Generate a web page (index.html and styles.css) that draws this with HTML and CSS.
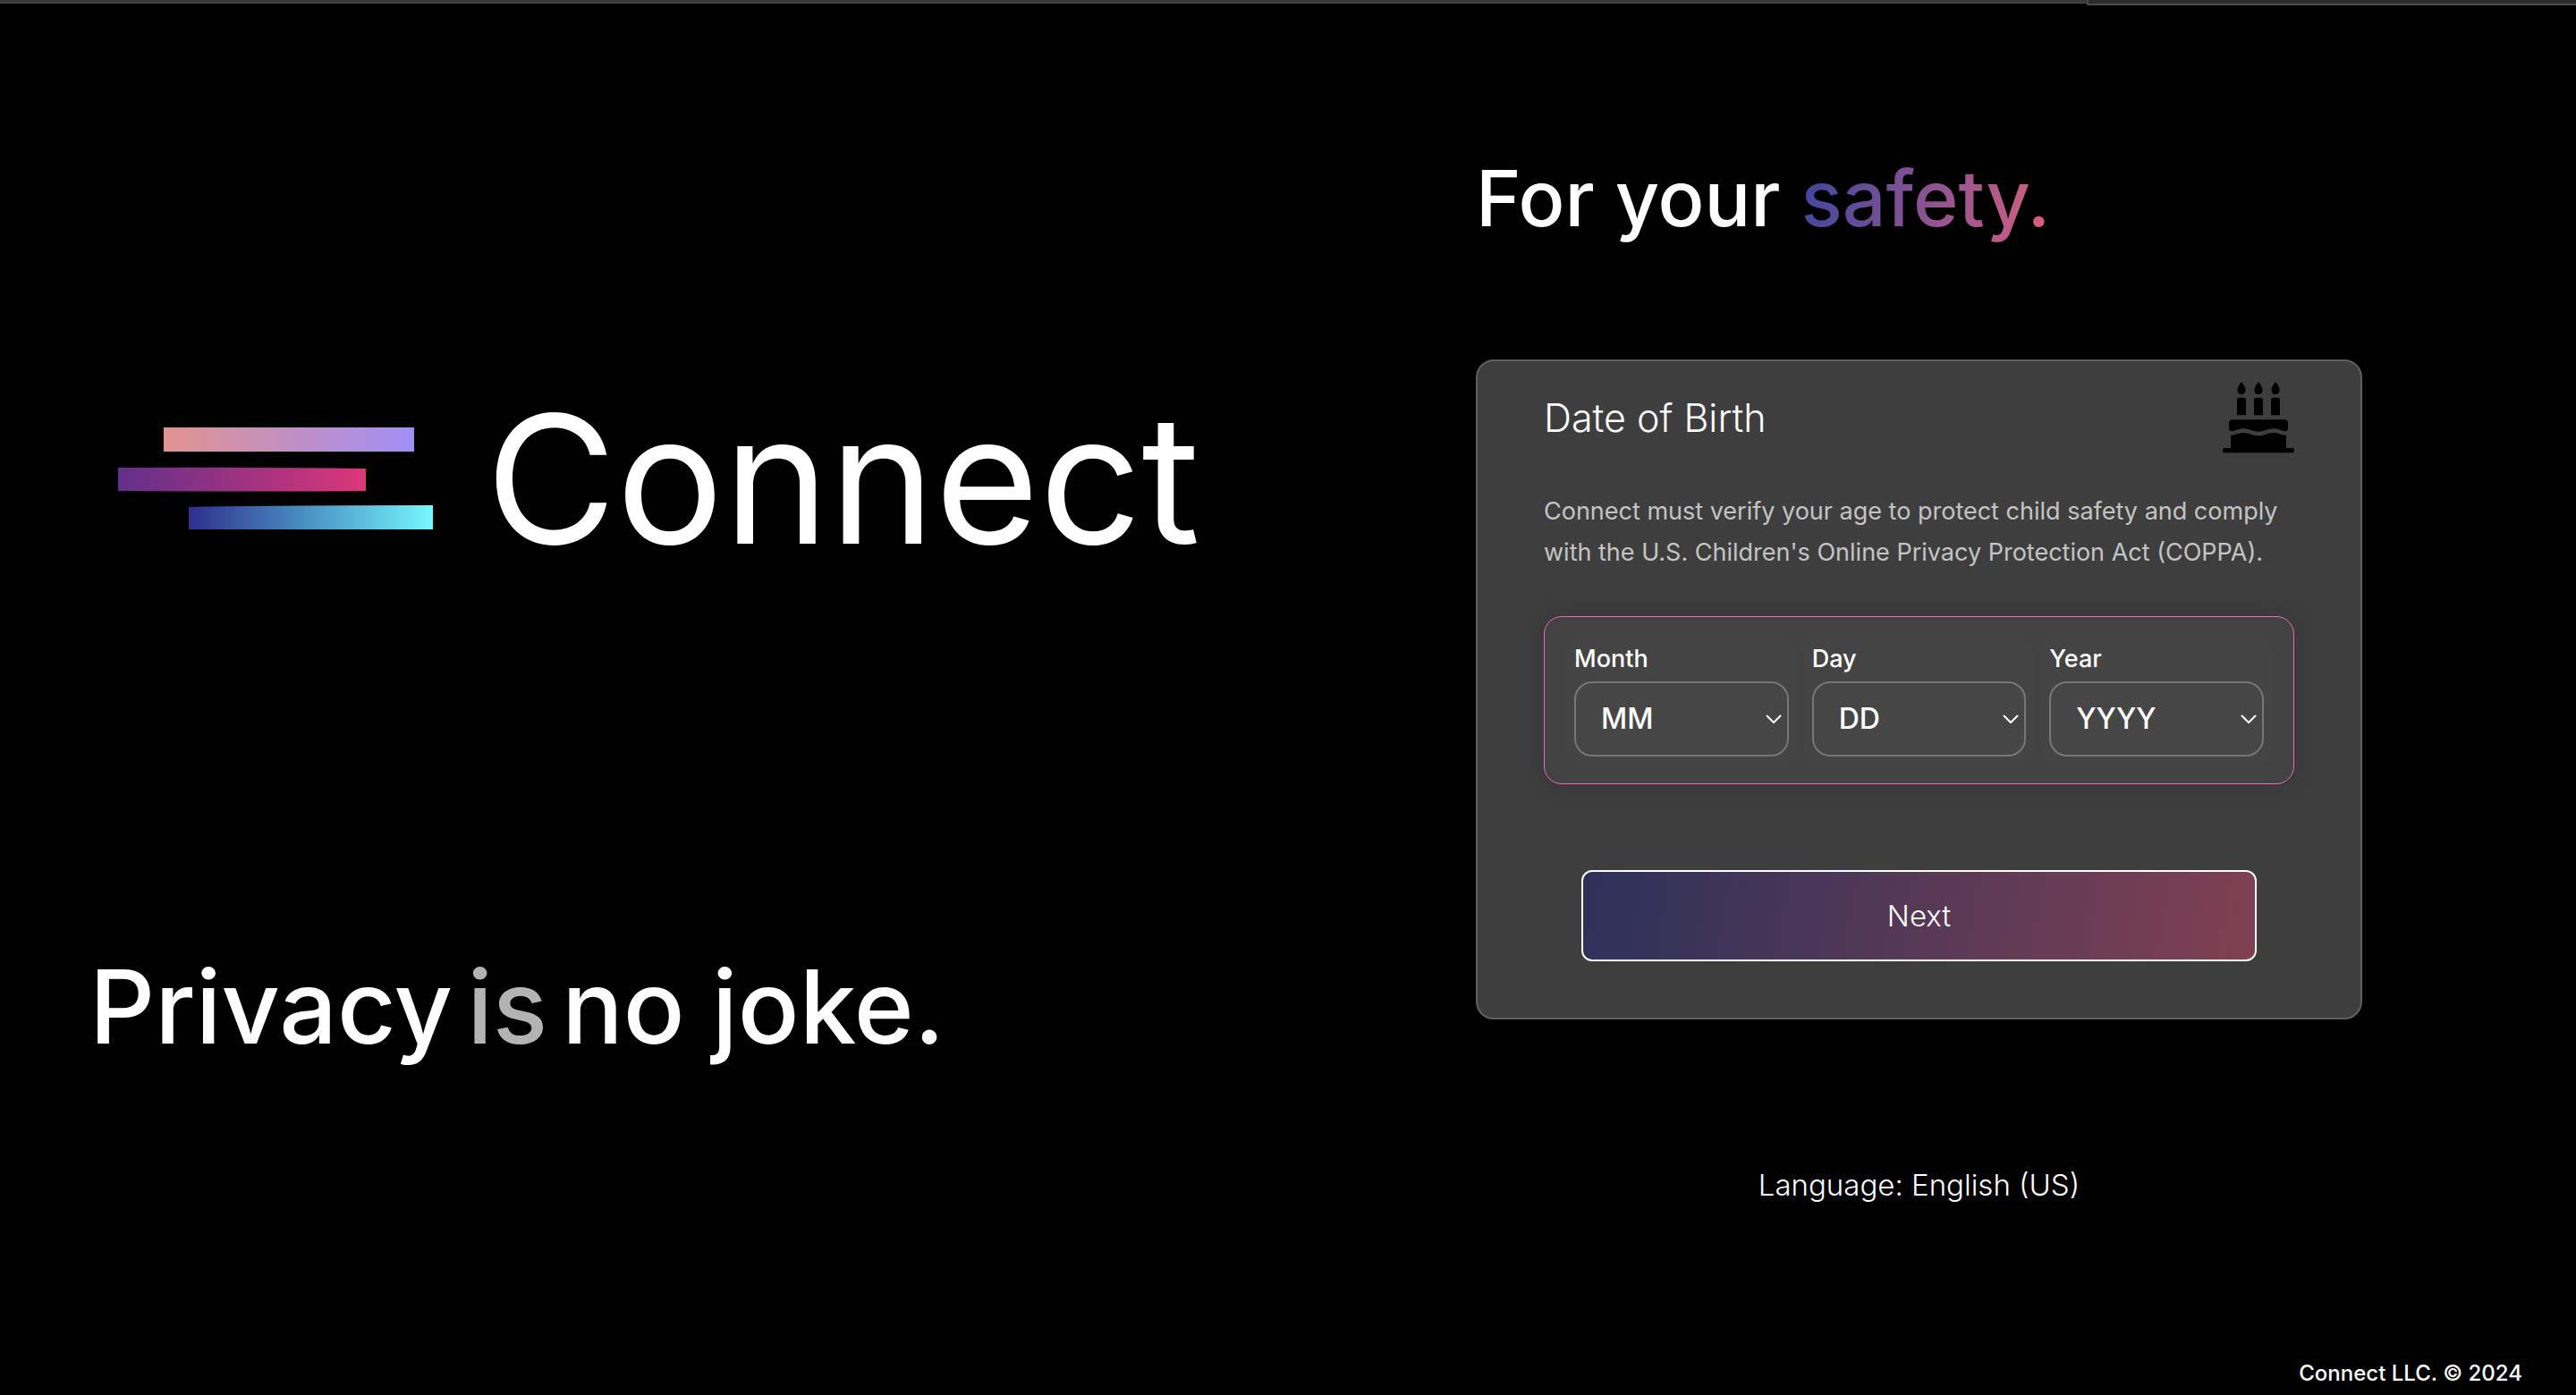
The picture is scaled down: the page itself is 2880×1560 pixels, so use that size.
FILE: index.html
```
<!DOCTYPE html>
<html lang="en">
<head>
<meta charset="utf-8">
<title>Connect – Date of Birth</title>
<link rel="stylesheet" href="styles.css">
</head>
<body>
<div class="top-edge"><span class="top-edge-main"></span><span class="top-edge-tab"></span></div>
<main class="page">
  <section class="intro">
    <div class="brand">
      <svg class="brand-mark" viewBox="0 0 352 114" aria-hidden="true">
        <defs>
          <linearGradient id="bar-top"><stop offset="0" stop-color="#e29390"/><stop offset=".5" stop-color="#c08fc2"/><stop offset="1" stop-color="#a18ff8"/></linearGradient>
          <linearGradient id="bar-mid"><stop offset="0" stop-color="#62308a"/><stop offset=".6" stop-color="#aa327e"/><stop offset="1" stop-color="#dc3878"/></linearGradient>
          <linearGradient id="bar-low"><stop offset="0" stop-color="#2f2f8d"/><stop offset=".5" stop-color="#4b94c4"/><stop offset="1" stop-color="#76f8fe"/></linearGradient>
        </defs>
        <path fill="url(#bar-top)" d="M51 0H331V27H51z"/>
        <path fill="url(#bar-mid)" d="M0 45Q100 44 277 46V71Q180 72 0 71z"/>
        <path fill="url(#bar-low)" d="M79 89Q200 87 352 87V114Q200 114 79 114z"/>
      </svg>
      <span class="brand-name">Connect</span>
    </div>
    <h2 class="tagline"><span>Privacy</span> <span class="tagline-soft">is</span> <span>no joke.</span></h2>
  </section>

  <section class="signup">
    <h1 class="title">For your <span class="title-accent">safety.</span></h1>
    <form class="card">
      <header class="card-head">
        <h2 class="card-title">Date of Birth</h2>
        <svg class="cake" viewBox="72 82 240 240" aria-hidden="true">
          <path d="M135 82Q121 99 121 110A14 14 0 0 0 149 110Q149 99 135 82zM192 82Q178 99 178 110A14 14 0 0 0 206 110Q206 99 192 82zM249 82Q235 99 235 110A14 14 0 0 0 263 110Q263 99 249 82z"/>
          <path d="M120 194V142Q120 135 127 135H143Q150 135 150 142V194zM177 194V142Q177 135 184 135H200Q207 135 207 142V194zM234 194V142Q234 135 241 135H257Q264 135 264 142V194z"/>
          <path d="M105 209H279Q291 209 291 221V238Q291 248 280 248C268 246 258 239 242 239C222 239 212 249 192 249C172 249 162 239 142 239C126 239 116 246 104 248Q93 248 93 238V221Q93 209 105 209z"/>
          <path d="M99 261C118 261 124 253 142 253C162 253 172 263 192 263C212 263 222 253 242 253C260 253 266 261 285 261V304H305Q312 304 312 312T305 320H79Q72 320 72 312T79 304H99z"/>
        </svg>
      </header>
      <p class="card-text">Connect must verify your age to protect child safety and comply with the U.S. Children's Online Privacy Protection Act (COPPA).</p>
      <div class="date-fields">
        <div class="field">
          <label for="month">Month</label>
          <div class="picker"><select id="month"><option>MM</option></select><svg class="chevron" viewBox="0 0 18 10" aria-hidden="true"><path d="M1 1l8 8 8-8"/></svg></div>
        </div>
        <div class="field">
          <label for="day">Day</label>
          <div class="picker"><select id="day"><option>DD</option></select><svg class="chevron" viewBox="0 0 18 10" aria-hidden="true"><path d="M1 1l8 8 8-8"/></svg></div>
        </div>
        <div class="field">
          <label for="year">Year</label>
          <div class="picker"><select id="year"><option>YYYY</option></select><svg class="chevron" viewBox="0 0 18 10" aria-hidden="true"><path d="M1 1l8 8 8-8"/></svg></div>
        </div>
      </div>
      <button class="next" type="button">Next</button>
    </form>
    <a class="language" href="#">Language: English (US)</a>
  </section>
</main>
<footer class="footer">Connect LLC. © 2024</footer>
</body>
</html>
```
FILE: styles.css
```
* { box-sizing: border-box; }

body {
  margin: 0;
  min-height: 100vh;
  display: flex;
  flex-direction: column;
  background: #000;
  color: #fff;
  font-family: Inter, "Liberation Sans", sans-serif;
}

h1, h2, p { margin: 0; font-weight: 400; }

.top-edge { display: flex; height: 6px; }
.top-edge-main { flex: 1; height: 4px; background: #3c3c3c; border-bottom: 1px solid #4c4c4c; }
.top-edge-tab { width: 19%; background: #2c2c2a; border: 2px solid #4c4c4c; border-top: 0; border-right: 0; }

.page {
  flex: 1;
  display: grid;
  grid-template-columns: minmax(0, 1fr) 991px;
  padding: 0 239px 0 100px;
}

.intro { padding-top: 409px; }
.brand { display: flex; align-items: center; gap: 59px; padding-left: 32px; }
.brand-mark { width: 352px; height: 114px; }
.brand-name { font-size: 200px; font-weight: 400; line-height: 240px; }
.tagline {
  display: flex;
  align-items: baseline;
  gap: 16px;
  margin-top: 395px;
  font-size: 114px;
  font-weight: 500;
  line-height: 152px;
}
.tagline-soft { color: #b3b3b3; }

.signup { display: flex; flex-direction: column; padding-top: 156px; }
.title { font-size: 86px; font-weight: 500; line-height: 120px; }
.title-accent {
  background: linear-gradient(100deg, #3b46a0, #d86080);
  background-clip: text;
  color: transparent;
}

.card {
  margin-top: 120px;
  padding: 22px 74px 63px;
  background: #3e3e3e;
  border: 2px solid #635c63;
  border-radius: 20px;
}
.card-head { display: flex; justify-content: space-between; align-items: center; height: 82px; }
.card-title { font-size: 43px; font-weight: 300; line-height: 60px; }
.cake { width: 80px; height: 80px; }
.card-text { margin-top: 41px; color: #c4c4c4; font-size: 27px; line-height: 46px; }

.date-fields {
  display: grid;
  grid-template-columns: repeat(3, 1fr);
  gap: 6px;
  margin-top: 48px;
  padding: 20px 23px;
  background: #424242;
  border: 1px solid #ee6cb4;
  border-radius: 20px;
  box-shadow: 0 0 30px rgba(0, 0, 0, .16);
}
.field { display: flex; flex-direction: column; padding: 10px; background: #444; border-radius: 20px; }
.field label { font-size: 27px; font-weight: 500; line-height: 34px; }
.picker { display: grid; align-items: center; margin-top: 8px; }
.picker > * { grid-area: 1 / 1; }
.picker select {
  appearance: none;
  width: 100%;
  height: 84px;
  padding: 0 28px;
  background: #464646;
  border: 2px solid #777;
  border-radius: 20px;
  color: #fff;
  font: 500 32px/40px Inter, "Liberation Sans", sans-serif;
}
.chevron {
  justify-self: end;
  width: 18px;
  height: 10px;
  margin-right: 8px;
  fill: none;
  stroke: #fff;
  stroke-width: 2;
  pointer-events: none;
}

.next {
  display: block;
  width: 90%;
  height: 102px;
  margin: 96px auto 0;
  background: linear-gradient(100deg, #2c315a, #804052);
  border: 2px solid #fff;
  border-radius: 12px;
  color: #fff;
  font: 300 33px/44px Inter, "Liberation Sans", sans-serif;
}

.language {
  align-self: center;
  margin-top: 163px;
  color: #fff;
  font-size: 33px;
  font-weight: 300;
  line-height: 44px;
  text-decoration: none;
}

.footer { padding: 0 60px 8px; font-size: 24px; font-weight: 500; line-height: 32px; text-align: right; }
```
